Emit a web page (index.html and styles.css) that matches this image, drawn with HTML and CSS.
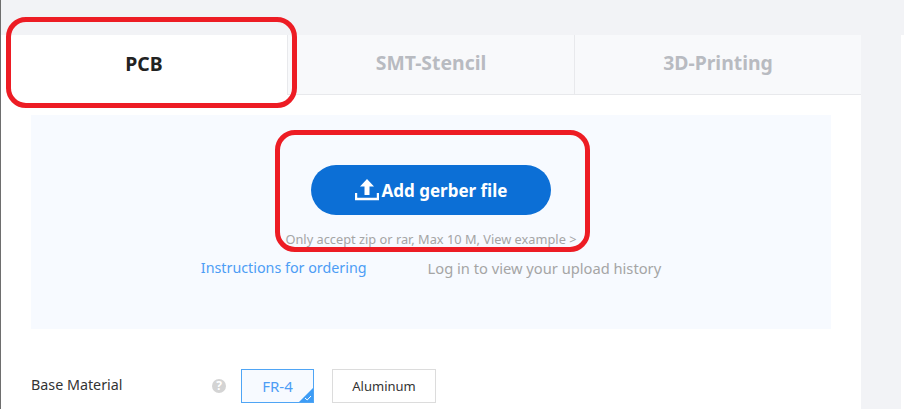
FILE: index.html
```html
<!DOCTYPE html>
<html lang="en">
<head>
    <meta charset="UTF-8">
    <title>Online PCB Quote</title>
    <link rel="stylesheet" href="styles.css">
</head>
<body>
    <div class="page">
        <!-- Quote card -->
        <div class="card">
            <div class="tabs">
                <div class="tab active">PCB</div>
                <div class="tab">SMT-Stencil</div>
                <div class="tab">3D-Printing</div>
            </div>

            <!-- Upload box -->
            <div class="upload-box">
                <button class="upload-btn">
                    <svg class="upload-icon" width="24" height="22" viewBox="0 0 24 22">
                        <path d="M12 0 L19 7.5 H14.5 V16 H9.5 V7.5 H5 Z" fill="#fff"/>
                        <path d="M1 14 V20 H23 V14" fill="none" stroke="#fff" stroke-width="2.4"/>
                    </svg>
                    Add gerber file
                </button>
                <div class="upload-hint">Only accept zip or rar, Max 10 M, View example &gt;</div>
                <div class="upload-links">
                    <a class="link-blue">Instructions for ordering</a>
                    <a class="link-gray">Log in to view your upload history</a>
                </div>
            </div>

            <!-- Options -->
            <div class="option-row">
                <div class="option-label">Base Material</div>
                <div class="help-icon">?</div>
                <div class="option-btn selected">FR-4
                    <svg class="check-corner" width="14" height="14" viewBox="0 0 14 14">
                        <path d="M14 0 V14 H0 Z" fill="#3d9cf5"/>
                        <path d="M6 10 L8.2 12 L12 8" fill="none" stroke="#fff" stroke-width="1"/>
                    </svg>
                </div>
                <div class="option-btn">Aluminum</div>
            </div>
        </div>

        <div class="side-panel"></div>
    </div>

    <!-- Red callouts drawn over the page -->
    <div class="callout callout-tab"></div>
    <div class="callout callout-upload"></div>
</body>
</html>
```

FILE: styles.css
```css
html, body {
    margin: 0;
    padding: 0;
    height: 100%;
    overflow: hidden;
}

body {
    font-family: "Noto Sans", Arial, sans-serif;
    background-color: #f2f3f6;
    border-left: 1px solid #6e6e6e;
    box-sizing: border-box;
}

.page {
    display: flex;
    padding-top: 35px;
    height: 100%;
    box-sizing: border-box;
}

/* Quote card */
.card {
    width: 860px;
    background-color: white;
}

.tabs {
    display: flex;
    height: 60px;
    box-sizing: border-box;
    background-color: #f8f9fb;
    border-bottom: 1px solid #e8e9ec;
}

.tab {
    flex: 1;
    display: flex;
    align-items: center;
    justify-content: center;
    font-size: 19.4px;
    font-weight: bold;
    color: #b8bbc1;
    border-right: 1px solid #e8e9ec;
    padding-bottom: 4px;
    box-sizing: border-box;
}

.tab:last-child {
    border-right: none;
}

.tab.active {
    color: #222;
    background-color: white;
    height: 60px;
}

/* Upload box */
.upload-box {
    margin: 20px 30px 0;
    height: 214px;
    padding-top: 50px;
    box-sizing: border-box;
    background-color: #f7faff;
    display: flex;
    flex-direction: column;
    align-items: center;
}

.upload-btn {
    width: 240px;
    height: 50px;
    display: flex;
    align-items: center;
    justify-content: center;
    gap: 3px;
    border: none;
    border-radius: 25px;
    background-color: #0c6fd6;
    color: white;
    font-family: inherit;
    font-size: 17px;
    font-weight: bold;
}

.upload-hint {
    margin-top: 16px;
    font-size: 12.8px;
    line-height: 16px;
    color: #a5a5a5;
}

.upload-links {
    display: flex;
    gap: 61px;
    margin-top: 11px;
    font-size: 14.3px;
    line-height: 20px;
}

.link-blue {
    color: #4d9df5;
}

.link-gray {
    font-size: 14.7px;
    color: #a5a5a5;
}

/* Options */
.option-row {
    display: flex;
    align-items: center;
    margin: 40px 0 0 30px;
    height: 34px;
    font-size: 14px;
}

.option-label {
    width: 181px;
    font-size: 14.3px;
    color: #333;
    margin-bottom: 3px;
}

.help-icon {
    width: 14px;
    height: 14px;
    border-radius: 50%;
    background-color: #d4d4d4;
    color: white;
    font-size: 12px;
    font-weight: bold;
    line-height: 14px;
    text-align: center;
    margin-right: 15px;
}

.option-btn {
    position: relative;
    height: 34px;
    box-sizing: border-box;
    display: flex;
    align-items: center;
    justify-content: center;
    width: 104px;
    margin-left: 18px;
    border: 1px solid #dcdcdc;
    font-size: 13px;
    color: #333;
}

.option-btn.selected {
    width: 73px;
    margin-left: 0;
    border-color: #4fa5f5;
    background-color: #f7faff;
    font-size: 15px;
    color: #4d9df5;
}

.check-corner {
    position: absolute;
    right: 0;
    bottom: 0;
}

.side-panel {
    margin-left: 40px;
    flex: 1;
    background-color: white;
}

/* Red callouts */
.callout {
    position: absolute;
    box-sizing: border-box;
    border: 5px solid #ed1c24;
    border-radius: 20px;
}

.callout-tab {
    left: 6px;
    top: 17px;
    width: 291px;
    height: 91px;
}

.callout-upload {
    left: 275px;
    top: 130px;
    width: 315px;
    height: 122px;
}
```
